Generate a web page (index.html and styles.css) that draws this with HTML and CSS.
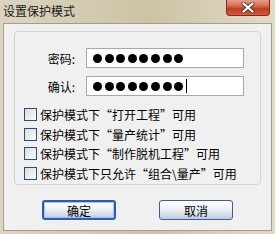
FILE: index.html
```html
<!DOCTYPE html>
<html lang="zh-CN">
  <head>
    <meta charset="UTF-8">
    <title>设置保护模式</title>
    <link rel="stylesheet" href="styles.css">
  </head>
  <body>
    <div class="window">
      <div class="titlebar">
        <span class="title">设置保护模式</span>
        <div class="close">
          <svg width="14" height="11" viewBox="0 0 14 11">
            <path d="M2.5 1.5 L11.5 9.5 M11.5 1.5 L2.5 9.5" stroke="#4b3b3a" stroke-width="4" stroke-linecap="round" fill="none"/>
            <path d="M2.5 1.5 L11.5 9.5 M11.5 1.5 L2.5 9.5" stroke="#fff" stroke-width="2.2" stroke-linecap="round" fill="none"/>
          </svg>
        </div>
      </div>

      <div class="client">
        <div class="group">
          <div class="field">
            <label>密码:</label>
            <div class="pwd"><i></i><i></i><i></i><i></i><i></i><i></i><i></i><i></i></div>
          </div>
          <div class="field">
            <label>确认:</label>
            <div class="pwd"><i></i><i></i><i></i><i></i><i></i><i></i><i></i><i></i><span class="caret"></span></div>
          </div>
          <ul class="options">
            <li><span class="check"></span>保护模式下“打开工程”可用</li>
            <li><span class="check"></span>保护模式下“量产统计”可用</li>
            <li><span class="check"></span>保护模式下“制作脱机工程”可用</li>
            <li><span class="check"></span>保护模式下只允许“组合\量产”可用</li>
          </ul>
        </div>
        <div class="actions">
          <button class="btn default">确定</button>
          <button class="btn">取消</button>
        </div>
      </div>
    </div>
  </body>
</html>
```

FILE: styles.css
```css
body {
  margin: 0;
  font-family: "Noto Sans CJK SC", "Liberation Sans", sans-serif;
  font-size: 12px;
  color: #000;
}

.window {
  width: 275px;
  height: 234px;
  display: flex;
  flex-direction: column;
  background: linear-gradient(to right, #dcd4c0, #cdc2a4 55%, #e0dac8);
}

.titlebar {
  height: 23px;
  display: flex;
  justify-content: space-between;
  align-items: flex-start;
  padding-left: 3px;
}

.title {
  line-height: 21px;
  color: #1a1a1a;
}

.close {
  width: 44px;
  height: 16px;
  margin-right: 5px;
  box-sizing: border-box;
  border: 1px solid #7d2b1d;
  border-top: none;
  border-radius: 0 0 4px 4px;
  background: linear-gradient(#e4a08c, #d66a50 40%, #c23b20 58%, #d45c3d);
  display: flex;
  align-items: center;
  justify-content: center;
}

.client {
  flex: 1;
  margin: 0 3px 3px 3px;
  border: 1px solid #a39e8c;
  background-color: #f0f0f0;
  padding: 7px 10px;
}

.group {
  height: 154px;
  box-sizing: border-box;
  border: 1px solid #d5d5d5;
  border-radius: 4px;
  padding-top: 16px;
}

.field {
  display: flex;
  align-items: center;
  height: 20px;
  margin-bottom: 8px;
}

.field label {
  width: 60px;
  margin-right: 11px;
  text-align: right;
}

.pwd {
  width: 158px;
  height: 20px;
  box-sizing: border-box;
  border: 1px solid #a5a9ae;
  background-color: #fff;
  display: flex;
  align-items: center;
  gap: 2.6px;
  padding-left: 6px;
}

.pwd i {
  width: 9px;
  height: 9px;
  border-radius: 50%;
  background-color: #000;
}

.caret {
  width: 1px;
  height: 14px;
  background-color: #000;
}

.options {
  list-style: none;
  margin: 9px 0 0 0;
  padding: 0;
}

.options li {
  height: 19.5px;
  display: flex;
  align-items: center;
}

.check {
  width: 13px;
  height: 13px;
  box-sizing: border-box;
  margin-left: 9px;
  margin-right: 3px;
  border: 1px solid #1c5180;
  background: linear-gradient(135deg, #dcdcd7, #fbfbfa);
}

.actions {
  display: flex;
  justify-content: center;
  gap: 43px;
  margin-top: 15px;
}

.btn {
  width: 74px;
  height: 20px;
  box-sizing: border-box;
  font-family: inherit;
  font-size: 12px;
  padding: 0;
  border: 1px solid #3d5f90;
  border-radius: 3px;
  background: linear-gradient(#ffffff, #eef1f6 45%, #d3dbe8 80%, #bccadd);
}

.btn.default {
  border: 2px solid #2f5cae;
  box-shadow: inset 0 0 0 1px #a9c1ea;
}
```
